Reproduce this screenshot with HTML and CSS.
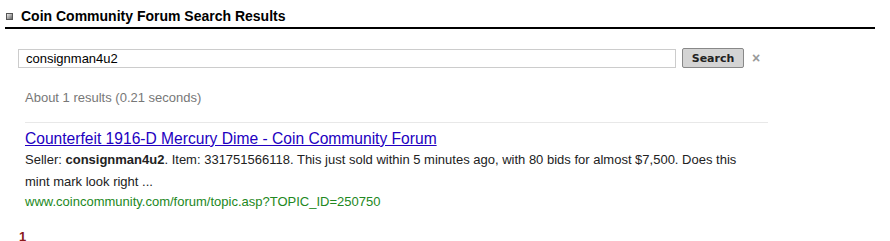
FILE: index.html
```html
<!DOCTYPE html>
<html lang="en">
<head>
<meta charset="utf-8">
<title>Coin Community Forum Search Results</title>
<link rel="stylesheet" href="styles.css">
</head>
<body>

<div class="header">
  <span class="bullet"></span>
  <h1>Coin Community Forum Search Results</h1>
</div>

<div class="searchbox">
  <input class="query" type="text" value="consignman4u2">
  <a class="button">Search</a>
  <span class="clear">&#215;</span>
</div>

<div class="results">
  <p class="stats">About 1 results (0.21 seconds)</p>
  <div class="result">
    <a class="title" href="#">Counterfeit 1916-D Mercury Dime - Coin Community Forum</a>
    <p class="snippet">Seller: <b>consignman4u2</b>. Item: 331751566118. This just sold within 5 minutes ago, with 80 bids for almost $7,500. Does this mint mark look right ...</p>
    <p class="url">www.coincommunity.com/forum/topic.asp?TOPIC_ID=250750</p>
  </div>
</div>

<div class="pages">1</div>

</body>
</html>
```

FILE: styles.css
```css
body {
  margin: 0;
  padding: 0 15px 0 5px;
  font-family: Arial, "Liberation Sans", sans-serif;
  background: #fff;
  color: #222;
}

.header {
  display: flex;
  align-items: center;
  height: 29px;
  border-bottom: 2px solid #000;
  padding-top: 5px;
  box-sizing: border-box;
}

.bullet {
  width: 5px;
  height: 5px;
  margin: 0 8px 0 1px;
  border: 1px solid #555;
  background: linear-gradient(135deg, #eee, #666);
}

h1 {
  margin: 0;
  font-size: 14px;
  font-weight: bold;
  color: #000;
}

.searchbox {
  display: flex;
  align-items: center;
  margin: 19px 0 0 13px;
}

.query {
  width: 658px;
  height: 19px;
  box-sizing: border-box;
  border: 1px solid #ccc;
  padding: 0 5px 0 7px;
  font-family: Arial, "Liberation Sans", sans-serif;
  font-size: 13px;
  color: #000;
  margin: 0;
}

.button {
  margin-left: 6px;
  width: 62px;
  height: 20px;
  box-sizing: border-box;
  background: #d4d4d4;
  border: 1px solid #888;
  border-radius: 2px;
  font-family: Verdana, "DejaVu Sans", sans-serif;
  font-size: 11px;
  font-weight: bold;
  color: #222;
  display: flex;
  align-items: center;
  justify-content: center;
}

.clear {
  margin-left: 8px;
  color: #999;
  font-size: 14px;
  font-weight: bold;
}

.results {
  margin-left: 13px;
  width: 750px;
}

.stats {
  margin: 22px 0 0 7px;
  font-size: 13px;
  color: #777;
  height: 24px;
  border-bottom: 1px solid #e8e8e8;
  padding-bottom: 8px;
}

.result {
  padding: 6px 0 0 7px;
}

.title {
  font-size: 15.6px;
  color: #2200c1;
  text-decoration: underline;
  line-height: 19px;
}

.snippet {
  margin: 1px 0 0;
  width: 722px;
  font-size: 13px;
  line-height: 22px;
  color: #222;
}

.url {
  margin: 0;
  font-size: 13px;
  line-height: 18px;
  color: #228822;
}

.pages {
  margin: 18px 0 0 14px;
  font-size: 13px;
  font-weight: bold;
  color: #8b1a1a;
}
```
